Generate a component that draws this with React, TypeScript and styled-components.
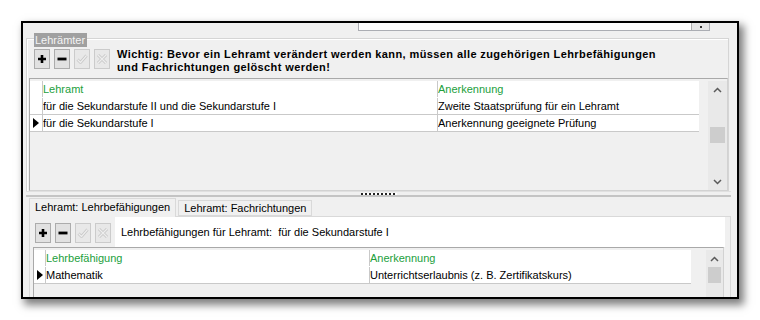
import React from 'react'
import styled, { createGlobalStyle } from 'styled-components'

const GlobalStyle = createGlobalStyle`
  body {
    margin: 0;
    background: #fff;
    font-family: 'Liberation Sans', Arial, sans-serif;
  }
`

const Page = styled.div`
  width: 760px;
  height: 320px;
  box-sizing: border-box;
  padding: 21px 0 0 21px;
`

const Window = styled.div`
  width: 718px;
  height: 278px;
  box-sizing: border-box;
  border: 2px solid #000;
  background: #f0f0f0;
  box-shadow: 4px 5px 8px 1px rgba(0, 0, 0, 0.5);
  overflow: hidden;
  display: flex;
  flex-direction: column;
  font-size: 11px;
  color: #000;

  & > * {
    flex-shrink: 0;
  }
`

const TopStrip = styled.div`
  height: 8px;
  display: flex;
  justify-content: flex-end;
  padding-right: 27px;
`

const TextBox = styled.div`
  width: 350px;
  height: 7px;
  background: #fff;
  border: 1px solid #abadb3;
  border-top: none;
  display: flex;
  justify-content: flex-end;
`

const EllipsisButton = styled.div`
  width: 17px;
  background: #e5e5e5;
  border-left: 1px solid #adadad;
  display: flex;
  justify-content: center;
  align-items: flex-end;
  padding-bottom: 2px;

  &::after {
    content: '';
    width: 2px;
    height: 2px;
    background: #333;
  }
`

const GroupBox = styled.div`
  position: relative;
  margin: 7px 8px 0 3px;
  border: 1px solid #d5d5d5;
  border-bottom: none;
  box-shadow: inset 1px 1px 0 #fff;
  display: flex;
  flex-direction: column;
`

const GroupLabel = styled.div`
  position: absolute;
  left: 7px;
  top: -6px;
  height: 14px;
  line-height: 14px;
  padding: 0 2px 0 1px;
  background: #a0a0a0;
  color: #f4f4f4;
`

const ToolRow = styled.div`
  display: flex;
  align-items: flex-start;
  padding: 9px 0 0 7px;
  height: 30px;
`

const ButtonSet = styled.div`
  display: flex;
  gap: 4px;
  margin-top: 1px;
`

const ToolButton = styled.div<{ $disabled?: boolean }>`
  width: 16px;
  height: 20px;
  box-sizing: border-box;
  border: 1px solid ${p => (p.$disabled ? '#cbcbcb' : '#acacac')};
  background: ${p => (p.$disabled ? '#e8e8e8' : '#e1e1e1')};
  display: flex;
  align-items: center;
  justify-content: center;
`

const Warning = styled.div`
  margin-left: 7px;
  font-weight: bold;
  font-size: 11px;
  letter-spacing: 0.4px;
  line-height: 13px;
  margin-top: 0;
`

const Grid = styled.div<{ $height: number; $inset: string }>`
  height: ${p => p.$height}px;
  margin: ${p => p.$inset};
  padding-top: 2px;
  box-sizing: border-box;
  border-top: 1px solid #a9a9a9;
  border-left: 1px solid #a9a9a9;
  border-bottom: 1px solid #d2d2d2;
  border-right: 1px solid #d2d2d2;
  display: flex;
`

const DataArea = styled.div`
  display: flex;
  flex-direction: column;
`

const Row = styled.div<{ $header?: boolean }>`
  display: flex;
  height: 17px;
  box-sizing: border-box;
  background: #fff;
  border-bottom: 1px solid ${p => (p.$header ? '#fff' : '#c9c9c9')};
`

const Indicator = styled.div<{ $width: number }>`
  width: ${p => p.$width}px;
  border-right: 1px solid #c9c9c9;
  display: flex;
  align-items: center;
  padding-left: 3px;
  box-sizing: border-box;
`

const Cell = styled.div<{ $width: number; $header?: boolean; $last?: boolean }>`
  width: ${p => p.$width}px;
  box-sizing: border-box;
  padding-left: 0;
  border-right: ${p => (p.$last ? 'none' : '1px solid #c9c9c9')};
  color: ${p => (p.$header ? '#22a03c' : '#000')};
  line-height: 16px;
  white-space: nowrap;
  overflow: hidden;
`

const ScrollBar = styled.div<{ $width: number }>`
  width: ${p => p.$width}px;
  margin-left: auto;
  background: #e9e9e9;
  display: flex;
  flex-direction: column;
  align-items: center;
`

const Arrow = styled.div`
  height: 17px;
  display: flex;
  align-items: center;
  justify-content: center;
`

const Spacer = styled.div`
  flex: 1;
`

const Thumb = styled.div<{ $top: number; $height: number }>`
  margin-top: ${p => p.$top}px;
  width: calc(100% - 4px);
  height: ${p => p.$height}px;
  background: #cdcdcd;
`

const Splitter = styled.div`
  height: 6px;
  margin: 0 6px 0 3px;
  box-sizing: border-box;
  border-top: 1px solid #e0e0e0;
  border-bottom: 2px solid #c4c4c4;
  display: flex;
  justify-content: center;
  align-items: center;
`

const Grip = styled.div`
  width: 36px;
  height: 2px;
  background: repeating-linear-gradient(90deg, #222 0 2px, #fff 2px 4px);
`

const TabStrip = styled.div`
  display: flex;
  align-items: flex-end;
  height: 19px;
  padding-left: 6px;
  position: relative;
  z-index: 1;
`

const Tab = styled.div<{ $active?: boolean }>`
  height: ${p => (p.$active ? 19 : 16)}px;
  box-sizing: border-box;
  padding: 0 5px;
  margin-right: ${p => (p.$active ? 2 : 0)}px;
  margin-bottom: ${p => (p.$active ? -1 : 0)}px;
  border: 1px solid #d9d9d9;
  border-bottom: ${p => (p.$active ? 'none' : '1px solid #d9d9d9')};
  background: #f0f0f0;
  line-height: ${p => (p.$active ? 17 : 14)}px;
  white-space: nowrap;
`

const TabPanel = styled.div`
  flex: 1 0 auto;
  margin: 0 6px 0 6px;
  border: 1px solid #d9d9d9;
  border-bottom: none;
  display: flex;
  flex-direction: column;
`

const ToolRow2 = styled.div`
  height: 30px;
  display: flex;
  align-items: center;
  padding-left: 5px;
`

const InfoLabel = styled.div`
  flex: 1;
  height: 30px;
  margin: 0 5px 0 4px;
  background: #fff;
  padding-left: 6px;
  line-height: 30px;
  white-space: nowrap;
`

const PlusIcon = () => (
  <svg width="10" height="10" viewBox="0 0 10 10">
    <path d="M5 1v8M1 5h8" stroke="#000" strokeWidth="2.6" />
  </svg>
)

const MinusIcon = () => (
  <svg width="10" height="10" viewBox="0 0 10 10">
    <path d="M0.5 5h9" stroke="#000" strokeWidth="2.8" />
  </svg>
)

const CheckIcon = () => (
  <svg width="12" height="12" viewBox="0 0 12 12">
    <path d="M1.5 6.5l3 3 6-7" stroke="#c6c6c6" strokeWidth="2.8" fill="none" strokeLinejoin="round" />
    <path d="M1.5 6.5l3 3 6-7" stroke="#eeeeee" strokeWidth="1.2" fill="none" strokeLinejoin="round" />
  </svg>
)

const CrossIcon = () => (
  <svg width="12" height="12" viewBox="0 0 12 12">
    <path d="M2 2l8 8M10 2l-8 8" stroke="#c6c6c6" strokeWidth="3" fill="none" />
    <path d="M2 2l8 8M10 2l-8 8" stroke="#eeeeee" strokeWidth="1.3" fill="none" />
  </svg>
)

const ChevronUp = () => (
  <svg width="9" height="6" viewBox="0 0 9 6">
    <path d="M1 5L4.5 1.5 8 5" stroke="#5a5a5a" strokeWidth="1.5" fill="none" />
  </svg>
)

const ChevronDown = () => (
  <svg width="9" height="6" viewBox="0 0 9 6">
    <path d="M1 1L4.5 4.5 8 1" stroke="#5a5a5a" strokeWidth="1.5" fill="none" />
  </svg>
)

const Pointer = () => (
  <svg width="6" height="10" viewBox="0 0 6 10">
    <path d="M0 0L6 5 0 10z" fill="#000" />
  </svg>
)

const Buttons = () => (
  <ButtonSet>
    <ToolButton><PlusIcon /></ToolButton>
    <ToolButton><MinusIcon /></ToolButton>
    <ToolButton $disabled><CheckIcon /></ToolButton>
    <ToolButton $disabled><CrossIcon /></ToolButton>
  </ButtonSet>
)

type Column = { width: number }

const DataRow = ({
  cols,
  values,
  header,
  current,
  indicator,
}: {
  cols: Column[]
  values: string[]
  header?: boolean
  current?: boolean
  indicator: number
}) => (
  <Row $header={header}>
    <Indicator $width={indicator}>{current && <Pointer />}</Indicator>
    {values.map((v, i) => (
      <Cell key={i} $width={cols[i].width} $header={header} $last={i === values.length - 1}>
        {v}
      </Cell>
    ))}
  </Row>
)

const lehramtCols = [{ width: 395 }, { width: 261 }]
const befaehigungCols = [{ width: 324 }, { width: 321 }]

export default function App() {
  return (
    <Page>
      <GlobalStyle />
      <Window>
        <TopStrip>
          <TextBox>
            <EllipsisButton />
          </TextBox>
        </TopStrip>

        <GroupBox>
          <GroupLabel>Lehrämter</GroupLabel>
          <ToolRow>
            <Buttons />
            <Warning>
              Wichtig: Bevor ein Lehramt verändert werden kann, müssen alle zugehörigen Lehrbefähigungen
              <br />
              und Fachrichtungen gelöscht werden!
            </Warning>
          </ToolRow>
          <Grid $height={113} $inset="0 0 0 2px">
            <DataArea>
              <DataRow indicator={13} cols={lehramtCols} header values={['Lehramt', 'Anerkennung']} />
              <DataRow
                indicator={13}
                cols={lehramtCols}
                values={['für die Sekundarstufe II und die Sekundarstufe I', 'Zweite Staatsprüfung für ein Lehramt']}
              />
              <DataRow
                indicator={13}
                cols={lehramtCols}
                current
                values={['für die Sekundarstufe I', 'Anerkennung geeignete Prüfung']}
              />
            </DataArea>
            <ScrollBar $width={19}>
              <Arrow><ChevronUp /></Arrow>
              <Thumb $top={29} $height={16} />
              <Spacer />
              <Arrow><ChevronDown /></Arrow>
            </ScrollBar>
          </Grid>
        </GroupBox>

        <Splitter>
          <Grip />
        </Splitter>

        <TabStrip>
          <Tab $active>Lehramt: Lehrbefähigungen</Tab>
          <Tab>Lehramt: Fachrichtungen</Tab>
        </TabStrip>
        <TabPanel>
          <ToolRow2>
            <Buttons />
            <InfoLabel>Lehrbefähigungen für Lehramt:&nbsp; für die Sekundarstufe I</InfoLabel>
          </ToolRow2>
          <Grid $height={60} $inset="0 6px 0 3px">
            <DataArea>
              <DataRow indicator={12} cols={befaehigungCols} header values={['Lehrbefähigung', 'Anerkennung']} />
              <DataRow
                indicator={12}
                cols={befaehigungCols}
                current
                values={['Mathematik', 'Unterrichtserlaubnis (z. B. Zertifikatskurs)']}
              />
            </DataArea>
            <ScrollBar $width={17}>
              <Arrow><ChevronUp /></Arrow>
              <Thumb $top={0} $height={16} />
            </ScrollBar>
          </Grid>
        </TabPanel>
      </Window>
    </Page>
  )
}
